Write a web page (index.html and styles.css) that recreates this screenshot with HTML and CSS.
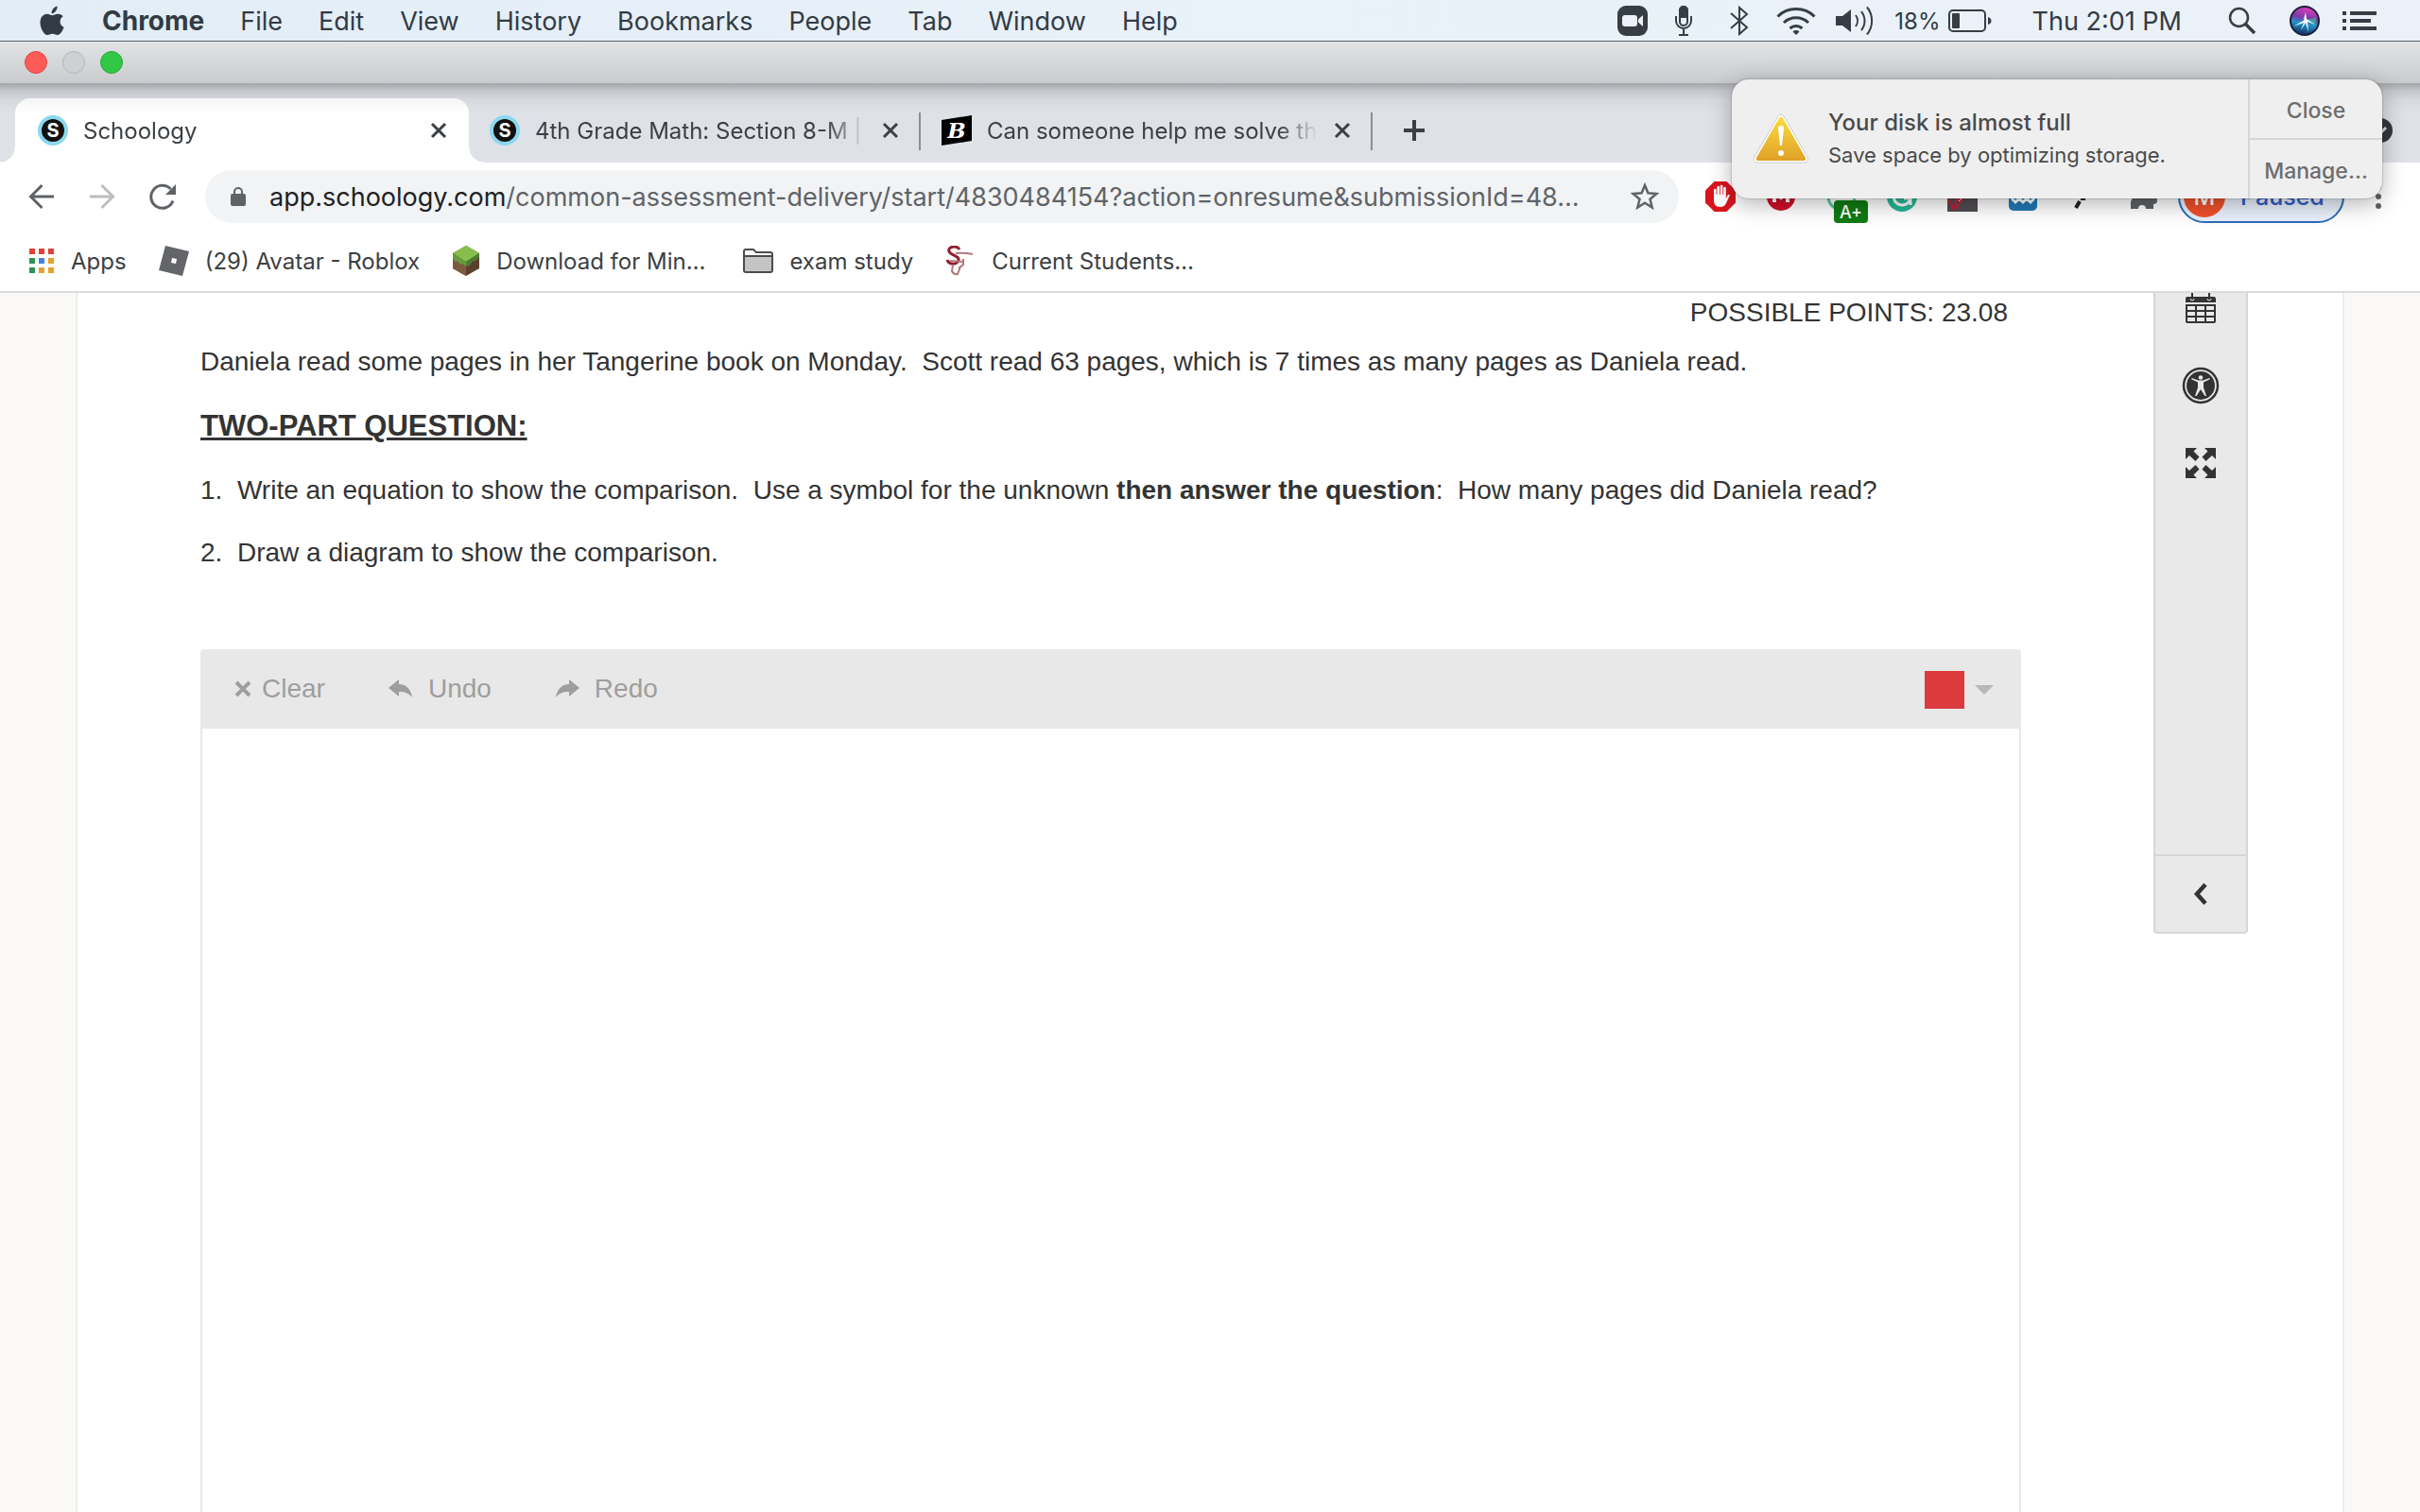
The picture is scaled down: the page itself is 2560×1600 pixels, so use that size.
FILE: index.html
```html
<!DOCTYPE html>
<html lang="en">
<head>
    <meta charset="UTF-8">
    <meta name="viewport" content="width=device-width, initial-scale=1.0">
    <title>Schoology</title>
    <link rel="stylesheet" href="styles.css">
</head>
<body>
    <!-- Mac menu bar -->
    <header class="menubar">
        <nav class="menus">
            <button class="menu apple" aria-label="Apple">
                <svg width="26" height="32" viewBox="0 0 26 32"><path d="M18.5 0.500c.3 2.400-.7 4.300-1.900 5.700-1.200 1.400-2.700 2.100-4 2-.2-2 .7-3.900 1.900-5.200C15.700 1.600 17.300.700 18.500.500zM24.700 11.300c-4.600 3-4 9.400.9 11.500-1 3-3.600 8.200-6.700 8.200-2 0-2.900-1.300-5.400-1.300S9.900 31 8 31C4.800 31 .5 24 .5 17.900c0-5.600 3.300-9.200 7.200-9.200 2.300 0 4.100 1.500 5.700 1.500 1.400 0 3.500-1.700 6.300-1.500 2 .1 3.800.9 5 2.600z" fill="#323b44"/></svg>
            </button>
            <button class="menu bold">Chrome</button>
            <button class="menu">File</button>
            <button class="menu">Edit</button>
            <button class="menu">View</button>
            <button class="menu">History</button>
            <button class="menu">Bookmarks</button>
            <button class="menu">People</button>
            <button class="menu">Tab</button>
            <button class="menu">Window</button>
            <button class="menu">Help</button>
        </nav>
        <div class="status">
            <svg class="zoom-app" width="32" height="32" viewBox="0 0 32 32"><rect width="32" height="32" rx="9" fill="#363d45"/><rect x="5" y="10" width="16" height="12" rx="3" fill="#eaf1f8"/><path d="M22 14.500 27 10v12l-5-4.500z" fill="#eaf1f8"/></svg>
            <svg class="mic" width="18" height="32" viewBox="0 0 18 32" fill="none" stroke="#363d45" stroke-width="2"><path d="M1 11v5a8 8 0 0 0 16 0v-5M9 24v6M4 31h10"/><rect x="5" y="1" width="8" height="20" rx="4"/><path d="M5 12V5a4 4 0 0 1 8 0v7z" fill="#363d45"/></svg>
            <svg class="bluetooth" width="20" height="32" viewBox="0 0 20 32" fill="none" stroke="#363d45" stroke-width="2"><path d="M1 8l17 15-8 7V2l8 7L1 24"/></svg>
            <svg class="wifi" width="42" height="30" viewBox="0 0 42 30" fill="none" stroke="#363d45" stroke-width="3"><path d="M1.500 10.500a28 28 0 0 1 39 0M8 17a19 19 0 0 1 26 0M14.500 23a10 10 0 0 1 13 0"/><path d="M17.500 26.500a5 5 0 0 1 7 0L21 30z" fill="#363d45" stroke="none"/></svg>
            <svg class="volume" width="42" height="32" viewBox="0 0 42 32" fill="none" stroke="#363d45" stroke-width="2"><path d="M0 11h7l9-7v24l-9-7H0z" fill="#363d45" stroke="none"/><path d="M21 10a10 10 0 0 1 0 12M27 6a16 16 0 0 1 0 20M33 1.500a23 23 0 0 1 0 29"/></svg>
            <span class="percent">18%</span>
            <svg class="battery" width="46" height="24" viewBox="0 0 46 24"><rect x="1" y="1" width="38" height="22" rx="4" fill="none" stroke="#363d45" stroke-width="2"/><rect x="4" y="4" width="8" height="16" rx="1" fill="#363d45"/><path d="M42 8q3.500 1 3.500 4T42 16z" fill="#363d45"/></svg>
            <span class="clock">Thu 2:01 PM</span>
            <svg class="search" width="30" height="30" viewBox="0 0 30 30" fill="none" stroke="#363d45"><circle cx="11.500" cy="11.500" r="9.500" stroke-width="2.500"/><path d="M18.500 18.500 28 28" stroke-width="3.500"/></svg>
            <svg class="siri" width="32" height="32" viewBox="0 0 32 32">
                <defs><linearGradient id="siri" x1="0.600" y1="0" x2="0.400" y2="1"><stop offset="0" stop-color="#e43fb8"/><stop offset="0.400" stop-color="#7b3aa8"/><stop offset="0.600" stop-color="#2196c8"/><stop offset="1" stop-color="#14285e"/></linearGradient></defs>
                <circle cx="16" cy="16" r="15" fill="url(#siri)" stroke="#1b2038" stroke-width="2"/>
                <path d="M17 15 28 13l-1 8z" fill="#2fc3a0" opacity=".7"/>
                <path d="M16 15 4 22l11-4-3 8 5-8 3 10-1-11 8 3-9-6-1-7-2 7-5-4z" fill="#f4fbff"/>
            </svg>
            <svg class="list" width="36" height="20" viewBox="0 0 36 20" fill="#363d45"><path d="M0 0h4v4H0zM0 8h4v4H0zM0 16h4v4H0zM8 0h28v4H8zM8 8h22v4H8zM8 16h28v4H8z"/></svg>
        </div>
    </header>

    <!-- Browser window -->
    <div class="titlebar">
        <button class="light red" aria-label="Close window"></button>
        <button class="light gray" aria-label="Minimize"></button>
        <button class="light green" aria-label="Zoom"></button>
    </div>

    <div class="tabstrip">
        <div class="tab active">
            <svg class="favicon" width="32" height="32" viewBox="0 0 32 32"><circle cx="16" cy="16" r="16" fill="#8bd8ef"/><circle cx="16" cy="16" r="12" fill="#111"/><text x="16" y="23" class="s-letter">S</text></svg>
            <a href="#" class="tab-title">Schoology</a>
            <button class="tab-close" aria-label="Close tab"><svg width="20" height="20" viewBox="0 0 20 20"><path d="M3 3l14 14M17 3 3 17"/></svg></button>
        </div>
        <div class="tab">
            <svg class="favicon" width="32" height="32" viewBox="0 0 32 32"><circle cx="16" cy="16" r="16" fill="#8bd8ef"/><circle cx="16" cy="16" r="12" fill="#111"/><text x="16" y="23" class="s-letter">S</text></svg>
            <a href="#" class="tab-title">4th Grade Math: Section 8-M |</a>
            <button class="tab-close" aria-label="Close tab"><svg width="20" height="20" viewBox="0 0 20 20"><path d="M3 3l14 14M17 3 3 17"/></svg></button>
        </div>
        <div class="tab">
            <svg class="favicon" width="32" height="32" viewBox="0 0 32 32"><path d="M0 5 32 0v27L0 32z"/><text x="16" y="24" class="b-letter">B</text></svg>
            <a href="#" class="tab-title">Can someone help me solve thi</a>
            <button class="tab-close" aria-label="Close tab"><svg width="20" height="20" viewBox="0 0 20 20"><path d="M3 3l14 14M17 3 3 17"/></svg></button>
        </div>
        <button class="new-tab" aria-label="New tab"><svg width="24" height="24" viewBox="0 0 24 24"><path d="M12 1v22M1 12h22"/></svg></button>
        <svg class="tab-search" width="28" height="28" viewBox="0 0 28 28"><circle cx="14" cy="14" r="13" fill="#35383c"/><path d="M8 11l6 6 6-6" fill="none" stroke="#dee1e6" stroke-width="3"/></svg>
    </div>

    <div class="toolbar">
        <button class="nav-btn" aria-label="Back"><svg width="28" height="28" viewBox="0 0 28 28"><path d="M27 14H3M14.500 2 2.500 14l12 12"/></svg></button>
        <button class="nav-btn off" aria-label="Forward"><svg width="28" height="28" viewBox="0 0 28 28"><path d="M1 14h24M13.500 2l12 12-12 12"/></svg></button>
        <button class="nav-btn" aria-label="Reload"><svg width="28" height="28" viewBox="0 0 28 28"><path d="M25 18.500A12 12 0 1 1 22.500 6"/><path d="M28 1v11H17z" fill="#5f6368" stroke="none"/></svg></button>
        <div class="omnibox">
            <svg width="18" height="22" viewBox="0 0 18 22"><rect x="1" y="8" width="16" height="13" rx="2" fill="#5f6368"/><path d="M5 9V6a4 4 0 0 1 8 0v3" fill="none" stroke="#5f6368" stroke-width="2"/></svg>
            <label for="url">app.schoology.com</label>
            <input id="url" type="text" value="/common-assessment-delivery/start/4830484154?action=onresume&amp;submissionId=48…">
            <button class="star" aria-label="Bookmark this tab"><svg width="30" height="30" viewBox="0 0 30 30"><path d="M15 3l3.400 8.300 9 .7-6.900 5.800 2.200 8.700L15 21.800l-7.700 4.700 2.200-8.700L2.600 12l9-.7z" fill="none" stroke="#5f6368" stroke-width="2.500"/></svg></button>
        </div>
        <div class="extensions">
            <svg width="32" height="32" viewBox="0 0 32 32"><path d="M9.500 0h13L32 9.500v13L22.500 32h-13L0 22.500v-13z" fill="#d9141e"/><path d="M9 16V9a1.300 1.300 0 0 1 2.600 0v5h.8V6a1.300 1.300 0 0 1 2.600 0v8h.8V5a1.300 1.300 0 0 1 2.600 0v9h.8V7a1.300 1.300 0 0 1 2.600 0v11l1.800-3.500c1-1.500 2.600-.5 2 .8L22.500 22c-1.500 4-4 5-7 5-4.500 0-6.500-3-6.500-7z" fill="#fff"/></svg>
            <svg width="32" height="32" viewBox="0 0 32 32"><circle cx="16" cy="16" r="15" fill="#d0102a"/><path d="M9 22V10l7 7 7-7v12" fill="none" stroke="#fff" stroke-width="4"/></svg>
            <div class="ext-badged">
                <svg width="32" height="32" viewBox="0 0 32 32"><circle cx="16" cy="16" r="14" fill="none" stroke="#57c4a2" stroke-width="3"/></svg>
                <span class="ext-badge">A+</span>
            </div>
            <svg width="32" height="32" viewBox="0 0 32 32"><circle cx="16" cy="16" r="16" fill="#27b795"/><path d="M23 10a9 9 0 1 0 2 8h-7M25 18v7" fill="none" stroke="#fff" stroke-width="3"/></svg>
            <svg width="32" height="32" viewBox="0 0 32 32"><path d="M0 0h32v32H0z" fill="#514c52"/><path d="M1 19l6 10 2-9 7-1-8 11" fill="none" stroke="#c81f35" stroke-width="2"/><path d="M2 17h14l-4 4" fill="none" stroke="#eee"/></svg>
            <svg width="32" height="32" viewBox="0 0 32 32"><rect x="1" y="1" width="30" height="30" rx="5" fill="#2178b5"/><path d="M4 18l4 4 4-4 4 4 4-4 4 4 4-4" fill="none" stroke="#fff" stroke-width="3"/></svg>
            <svg width="32" height="32" viewBox="0 0 32 32"><path d="M8 28l4-7M13 18h5" stroke="#222" stroke-width="4"/></svg>
            <svg width="32" height="32" viewBox="0 0 32 32"><path d="M2 8h8a4 4 0 0 1 8 0h8v8a4 4 0 0 1 0 8v5h-8a4 4 0 0 0-8 0H2v-8a4 4 0 0 0 0-6z" fill="#5f6368"/></svg>
        </div>
        <button class="profile"><span class="avatar">M</span>Paused</button>
        <button class="more" aria-label="More"><svg width="8" height="32" viewBox="0 0 8 32" fill="#5f6368"><circle cx="4" cy="6" r="3"/><circle cx="4" cy="16" r="3"/><circle cx="4" cy="26" r="3"/></svg></button>
    </div>

    <nav class="bookmarks">
        <a href="#" class="bookmark">
            <svg width="28" height="28" viewBox="0 0 28 28"><path d="M1 1h6v6H1zM11 1h6v6h-6zM21 1h6v6h-6z" fill="#db4437"/><path d="M1 11h6v6H1zM1 21h6v6H1z" fill="#2f9058"/><path d="M11 11h6v6h-6z" fill="#4285e0"/><path d="M21 11h6v6h-6zM11 21h6v6h-6zM21 21h6v6h-6z" fill="#e8a030"/></svg>
            Apps
        </a>
        <a href="#" class="bookmark">
            <svg width="32" height="32" viewBox="0 0 32 32"><path d="M7 0 32 6 25 32 0 26z" fill="#636568"/><path d="M14 13l5 1-1 5-5-1z" fill="#fff"/></svg>
            (29) Avatar - Roblox
        </a>
        <a href="#" class="bookmark clipped">
            <svg width="30" height="32" viewBox="0 0 30 32"><path d="M15 0 29 8v16l-14 8L1 24V8z" fill="#5b4030"/><path d="M1 12v12l14 8V20z" fill="#7c5a40"/><path d="M15 0 29 8 15 17 1 8z" fill="#86bf4c"/><path d="M1 8l14 9v5l-3-3-3 1-3-4-2 1-3-3z" fill="#679c3c"/><path d="M15 17l14-9v4l-4 4-3 0-3 5-4 1z" fill="#4c7c2f"/></svg>
            Download for Min…
        </a>
        <a href="#" class="bookmark">
            <svg width="32" height="32" viewBox="0 -3 32 32"><path d="M1 8h30v15q0 2-2 2H3q-2 0-2-2z" fill="#c4c4c4"/><path d="M1 8V3q0-2 2-2h8l3 3h15q2 0 2 2v17q0 2-2 2H3q-2 0-2-2V8h30" fill="none" stroke="#4b4c4e" stroke-width="2"/></svg>
            exam study
        </a>
        <a href="#" class="bookmark">
            <svg width="32" height="32" viewBox="0 0 32 32" fill="none"><path d="M15 4C12-1 2 1 4 6s11 4 10 9-10 6-12 0" stroke="#8f1f2c" stroke-width="3"/><path d="M11 8q9-1 18 1M5 16l14 1M19 14v6l-5 4M8 20l-1 7q2 4 6 3l3-8" stroke="#b3777c" stroke-width="2"/></svg>
            Current Students…
        </a>
    </nav>

    <!-- Page -->
    <main class="page">
        <div class="sheet">
            <article class="question">
                <div class="points">POSSIBLE POINTS: 23.08</div>
                <p>Daniela read some pages in her Tangerine book on Monday.&nbsp; Scott read 63 pages, which is 7 times as many pages as Daniela read.</p>
                <h2>TWO-PART QUESTION:</h2>
                <p>1.&nbsp; Write an equation to show the comparison.&nbsp; Use a symbol for the unknown <strong>then answer the question</strong>:&nbsp; How many pages did Daniela read?</p>
                <p>2.&nbsp; Draw a diagram to show the comparison.</p>

                <section class="drawing">
                    <div class="drawing-tools">
                        <button class="tool"><svg width="18" height="18" viewBox="0 0 18 18"><path d="M2 2l14 14M16 2 2 16" stroke="#9e9e9e" stroke-width="4"/></svg>Clear</button>
                        <button class="tool history"><svg width="26" height="20" viewBox="0 0 26 20"><path d="M0 9 11 0v5c8 0 13 6 14 14-4-5-8-6-14-6v5z" fill="#9e9e9e"/></svg>Undo</button>
                        <button class="tool history"><svg width="26" height="20" viewBox="0 0 26 20"><path d="M26 9 15 0v5C7 5 2 11 1 19c4-5 8-6 14-6v5z" fill="#9e9e9e"/></svg>Redo</button>
                        <button class="color-picker" aria-label="Color"><span class="swatch"></span><span class="arrow"></span></button>
                    </div>
                    <div class="canvas"></div>
                </section>
            </article>

            <aside class="rail">
                <button class="rail-btn" aria-label="Calendar"><svg width="32" height="32" viewBox="0 0 32 32"><path d="M2 4h28q2 0 2 2v4H0V6q0-2 2-2z" fill="#333"/><path d="M7 0v7M25 0v7" stroke="#333" stroke-width="2"/><path d="M5 6a2 2 0 0 0 4 0M23 6a2 2 0 0 0 4 0" fill="none" stroke="#e9e9e9"/><path d="M1 13h30v17q0 1-1 1H2q-1 0-1-1zM1 19h30M1 25h30M11 13v18M21 13v18" fill="none" stroke="#333" stroke-width="2"/></svg></button>
                <button class="rail-btn" aria-label="Accessibility"><svg width="40" height="40" viewBox="0 0 40 40"><circle cx="20" cy="20" r="18" fill="none" stroke="#333" stroke-width="2.500"/><circle cx="20" cy="20" r="15" fill="#333"/><circle cx="20" cy="11.500" r="2.300" fill="#e9e9e9"/><path d="M10.500 12l7 2.500h5l7-2.500.3 1.200-6.800 3.300V22l3 9h-1.500L20 24l-4.500 7H14l3-9v-5.500l-6.800-3.300z" fill="#e9e9e9"/></svg></button>
                <button class="rail-btn" aria-label="Full screen"><svg width="34" height="34" viewBox="0 0 34 34" fill="#333"><path id="arrow" d="M1 1h12L9.500 4.500l6 6-4 4.500L5 9l-4 4z"/><use href="#arrow" transform="matrix(-1 0 0 1 34 0)"/><use href="#arrow" transform="matrix(1 0 0 -1 0 34)"/><use href="#arrow" transform="rotate(180 17 17)"/></svg></button>
                <button class="rail-toggle" aria-label="Collapse"><svg width="16" height="24" viewBox="0 0 16 24"><path d="M13 2 4 12l9 10" fill="none" stroke="#333" stroke-width="4.500"/></svg></button>
            </aside>
        </div>
    </main>

    <!-- System notification -->
    <div class="notification">
        <svg class="warning" width="60" height="56" viewBox="0 0 60 56">
            <defs><linearGradient id="warn" x1="0" y1="0" x2="0" y2="1"><stop offset="0" stop-color="#fbdc3c"/><stop offset="1" stop-color="#dfa028"/></linearGradient></defs>
            <path d="M27 4q3-4 6 0l25 43q2 6-3 6H5q-5 0-3-6z" fill="#fff" stroke="#ccc"/>
            <path d="M28 6q2-3 4 0l24 42q1 3-2 3H6q-3 0-2-3z" fill="url(#warn)"/>
            <path d="M27 17q0-3 3-3t3 3l-2 18h-2z" fill="#fff"/><circle cx="30" cy="43" r="3" fill="#fff"/>
        </svg>
        <div class="message">
            <div class="message-title">Your disk is almost full</div>
            <div class="message-text">Save space by optimizing storage.</div>
        </div>
        <div class="actions">
            <button>Close</button>
            <button>Manage…</button>
        </div>
    </div>
</body>
</html>
```
FILE: styles.css
```css
* {
    box-sizing: border-box;
}
body {
    margin: 0;
    height: 100vh;
    overflow: hidden;
    display: flex;
    flex-direction: column;
    position: relative;
    background: #fff;
    font-family: Inter, "Liberation Sans", sans-serif;
    font-size: 24px;
    color: #3c4043;
}
button {
    border: none;
    background: none;
    padding: 0;
    font: inherit;
    color: inherit;
    display: flex;
    align-items: center;
    justify-content: center;
    cursor: pointer;
}
a {
    color: inherit;
    text-decoration: none;
}
svg {
    flex: none;
    display: block;
}

/* Menu bar */
.menubar {
    flex: none;
    height: 44px;
    display: flex;
    justify-content: space-between;
    align-items: center;
    padding: 1px 46px 0 42px;
    background: linear-gradient(90deg, #e2edf5, #e9f1f9 50%, #ebf1f8);
    border-bottom: 1px solid #5b656c;
    font-size: 27px;
    color: #323b44;
}
.menus {
    display: flex;
    align-items: center;
    gap: 38px;
}
.apple {
    margin-right: 2px;
}
.bold {
    font-size: 28px;
    font-weight: 700;
}
.status {
    display: flex;
    align-items: center;
}
.mic {
    margin-left: 29px;
}
.bluetooth {
    margin-left: 40px;
}
.wifi {
    margin-left: 29px;
}
.volume {
    margin-left: 21px;
}
.percent {
    margin-left: 20px;
    font-size: 24px;
}
.battery {
    margin-left: 8px;
}
.clock {
    margin-left: 43px;
}
.search {
    margin-left: 49px;
}
.siri {
    margin-left: 35px;
}
.list {
    margin-left: 24px;
}

/* Title bar */
.titlebar {
    flex: none;
    height: 44px;
    display: flex;
    align-items: center;
    gap: 16px;
    padding: 0 26px;
    background: linear-gradient(#e1e3e4, #cacbce);
}
.light {
    width: 24px;
    height: 24px;
    border-radius: 50%;
    border: 1px solid;
}
.red {
    background: #fc5b57;
    border-color: #e2443f;
}
.gray {
    background: #cfd0d1;
    border-color: #b4b5b6;
}
.green {
    background: #33c748;
    border-color: #25a935;
}

/* Tabs */
.tabstrip {
    flex: none;
    height: 84px;
    display: flex;
    align-items: flex-end;
    padding: 0 28px 0 16px;
    background: linear-gradient(#a4a6aa, #c3c6cb 8px, #d6d9de 18px, #dee1e6 30px);
}
.tab {
    position: relative;
    width: 480px;
    height: 68px;
    margin-right: -2px;
    padding: 0 22px 0 24px;
    display: flex;
    align-items: center;
    gap: 16px;
}
.tab.active {
    background: linear-gradient(#f5f5f6, #fff 16px);
    border-radius: 16px 16px 0 0;
}
.tab.active::before,
.tab.active::after {
    content: "";
    position: absolute;
    bottom: 0;
    width: 16px;
    height: 16px;
}
.tab.active::before {
    left: -16px;
    background: radial-gradient(circle at 0 0, transparent 15px, #fff 16px);
}
.tab.active::after {
    right: -16px;
    background: radial-gradient(circle at 100% 0, transparent 15px, #fff 16px);
}
.tab:not(.active)::after {
    content: "";
    position: absolute;
    right: 0;
    top: 15px;
    width: 2px;
    height: 40px;
    background: #8b8f94;
}
.tab-title {
    flex: 1;
    overflow: hidden;
    white-space: nowrap;
    -webkit-mask-image: linear-gradient(90deg, #000 88%, transparent);
    mask-image: linear-gradient(90deg, #000 88%, transparent);
}
.tab-close svg {
    fill: none;
    stroke: #3c4043;
    stroke-width: 3px;
}
.s-letter {
    font: 700 20px Inter, sans-serif;
    fill: #fff;
    text-anchor: middle;
}
.b-letter {
    font: italic 700 23px "DejaVu Serif", serif;
    fill: #fff;
    text-anchor: middle;
}
.new-tab {
    height: 68px;
    margin-left: 34px;
}
.new-tab svg {
    stroke: #3c4043;
    stroke-width: 4px;
}
.tab-search {
    margin: 0 0 20px auto;
}

/* Toolbar */
.toolbar {
    flex: none;
    height: 72px;
    display: flex;
    align-items: center;
    padding: 0 40px 0 30px;
}
.nav-btn {
    margin-right: 36px;
}
.nav-btn svg {
    fill: none;
    stroke: #5f6368;
    stroke-width: 3px;
}
.nav-btn.off svg {
    stroke: #bbbdbf;
}
.omnibox {
    flex: 1;
    min-width: 0;
    height: 56px;
    margin: 0 28px 0 -5px;
    padding: 0 21px 0 26px;
    display: flex;
    align-items: center;
    background: #f1f3f4;
    border-radius: 28px;
    font-size: 27px;
}
.omnibox label {
    margin-left: 24px;
    color: #202124;
}
.omnibox input {
    flex: 1;
    min-width: 0;
    padding: 0;
    border: none;
    outline: none;
    background: none;
    font: inherit;
    color: #5f6368;
}
.extensions {
    display: flex;
    gap: 32px;
}
.ext-badged {
    position: relative;
}
.ext-badge {
    position: absolute;
    left: 8px;
    top: 20px;
    width: 36px;
    height: 24px;
    border-radius: 4px;
    background: #0f7b12;
    color: #fff;
    font-size: 18px;
    font-weight: 500;
    line-height: 26px;
    text-align: center;
}
.profile {
    height: 56px;
    width: 176px;
    margin: 0 32px 0 20px;
    padding-left: 4px;
    justify-content: flex-start;
    gap: 16px;
    border: 2px solid #2c6cb5;
    border-radius: 28px;
    background: #e8f0fb;
    color: #2f5bc4;
    font-size: 25px;
    font-weight: 500;
}
.avatar {
    width: 44px;
    height: 44px;
    border-radius: 50%;
    background: #f0502a;
    color: #fff;
    line-height: 44px;
}

/* Bookmarks */
.bookmarks {
    flex: none;
    height: 66px;
    display: flex;
    align-items: center;
    gap: 34px;
    padding: 0 30px;
    border-bottom: 2px solid #dadbdd;
}
.bookmark {
    display: flex;
    align-items: center;
    gap: 17px;
}
.bookmark.clipped {
    margin-right: 6px;
}

/* Page */
.page {
    flex: 1;
    min-height: 0;
    display: flex;
    padding: 0 80px;
    background: #faf9f7;
    font-family: "Liberation Sans", Arial, sans-serif;
    font-size: 28px;
    line-height: 32px;
    color: #333;
}
.sheet {
    flex: 1;
    display: flex;
    gap: 140px;
    padding: 0 100px 0 130px;
    background: #fff;
    border: solid #eeeeed;
    border-width: 0 2px;
}
.question {
    flex: 1;
    display: flex;
    flex-direction: column;
}
.points {
    margin: 5px 14px 0;
    text-align: right;
}
.question p,
.question h2 {
    margin: 20px 0 14px;
}
.question h2 {
    font-size: 31px;
    line-height: 36px;
    text-decoration: underline;
}
.drawing {
    flex: 1;
    display: flex;
    flex-direction: column;
    margin-top: 72px;
    border: 2px solid #e8e8e8;
    border-bottom: none;
    border-radius: 4px 4px 0 0;
}
.drawing-tools {
    height: 82px;
    display: flex;
    align-items: center;
    padding: 0 27px 0 34px;
    background: #e8e8e8;
    color: #9e9e9e;
}
.tool {
    gap: 11px;
    margin: 0 67px 3px 0;
}
.tool.history {
    gap: 16px;
}
.canvas {
    flex: 1;
}
.color-picker {
    margin-left: auto;
    gap: 11px;
}
.swatch {
    width: 42px;
    height: 40px;
    background: #dc3b3e;
}
.arrow {
    border: 10px solid transparent;
    border-top-color: #b8b8b8;
    border-bottom: none;
}

/* Right rail */
.rail {
    align-self: flex-start;
    width: 100px;
    height: 678px;
    display: flex;
    flex-direction: column;
    background: #e9e9e9;
    border: 2px solid #d6d6d6;
    border-top: none;
    border-radius: 0 0 4px 4px;
}
.rail-btn {
    height: 82px;
}
.rail-btn:first-child {
    height: 32px;
    margin-bottom: 25px;
}
.rail-toggle {
    height: 82px;
    margin-top: auto;
    border-top: 2px solid #d6d6d6;
}

/* Notification */
.notification {
    position: absolute;
    top: 84px;
    right: 40px;
    width: 688px;
    height: 126px;
    display: flex;
    align-items: center;
    padding-left: 22px;
    background: #efefef;
    border-radius: 18px;
    box-shadow: 0 0 2px rgba(0, 0, 0, 0.4), 0 6px 24px rgba(0, 0, 0, 0.3);
    color: #4a4a4a;
}
.message {
    flex: 1;
    margin-left: 20px;
    line-height: 34px;
}
.message-title {
    font-size: 24px;
    font-weight: 500;
}
.message-text {
    font-size: 22px;
}
.actions {
    align-self: stretch;
    width: 142px;
    display: flex;
    flex-direction: column;
    border-left: 2px solid #d5d5d5;
    color: #6d6d6d;
}
.actions button {
    flex: 1;
    padding-top: 3px;
    font-size: 23px;
    font-weight: 500;
}
.actions button + button {
    border-top: 2px solid #d5d5d5;
}
```
